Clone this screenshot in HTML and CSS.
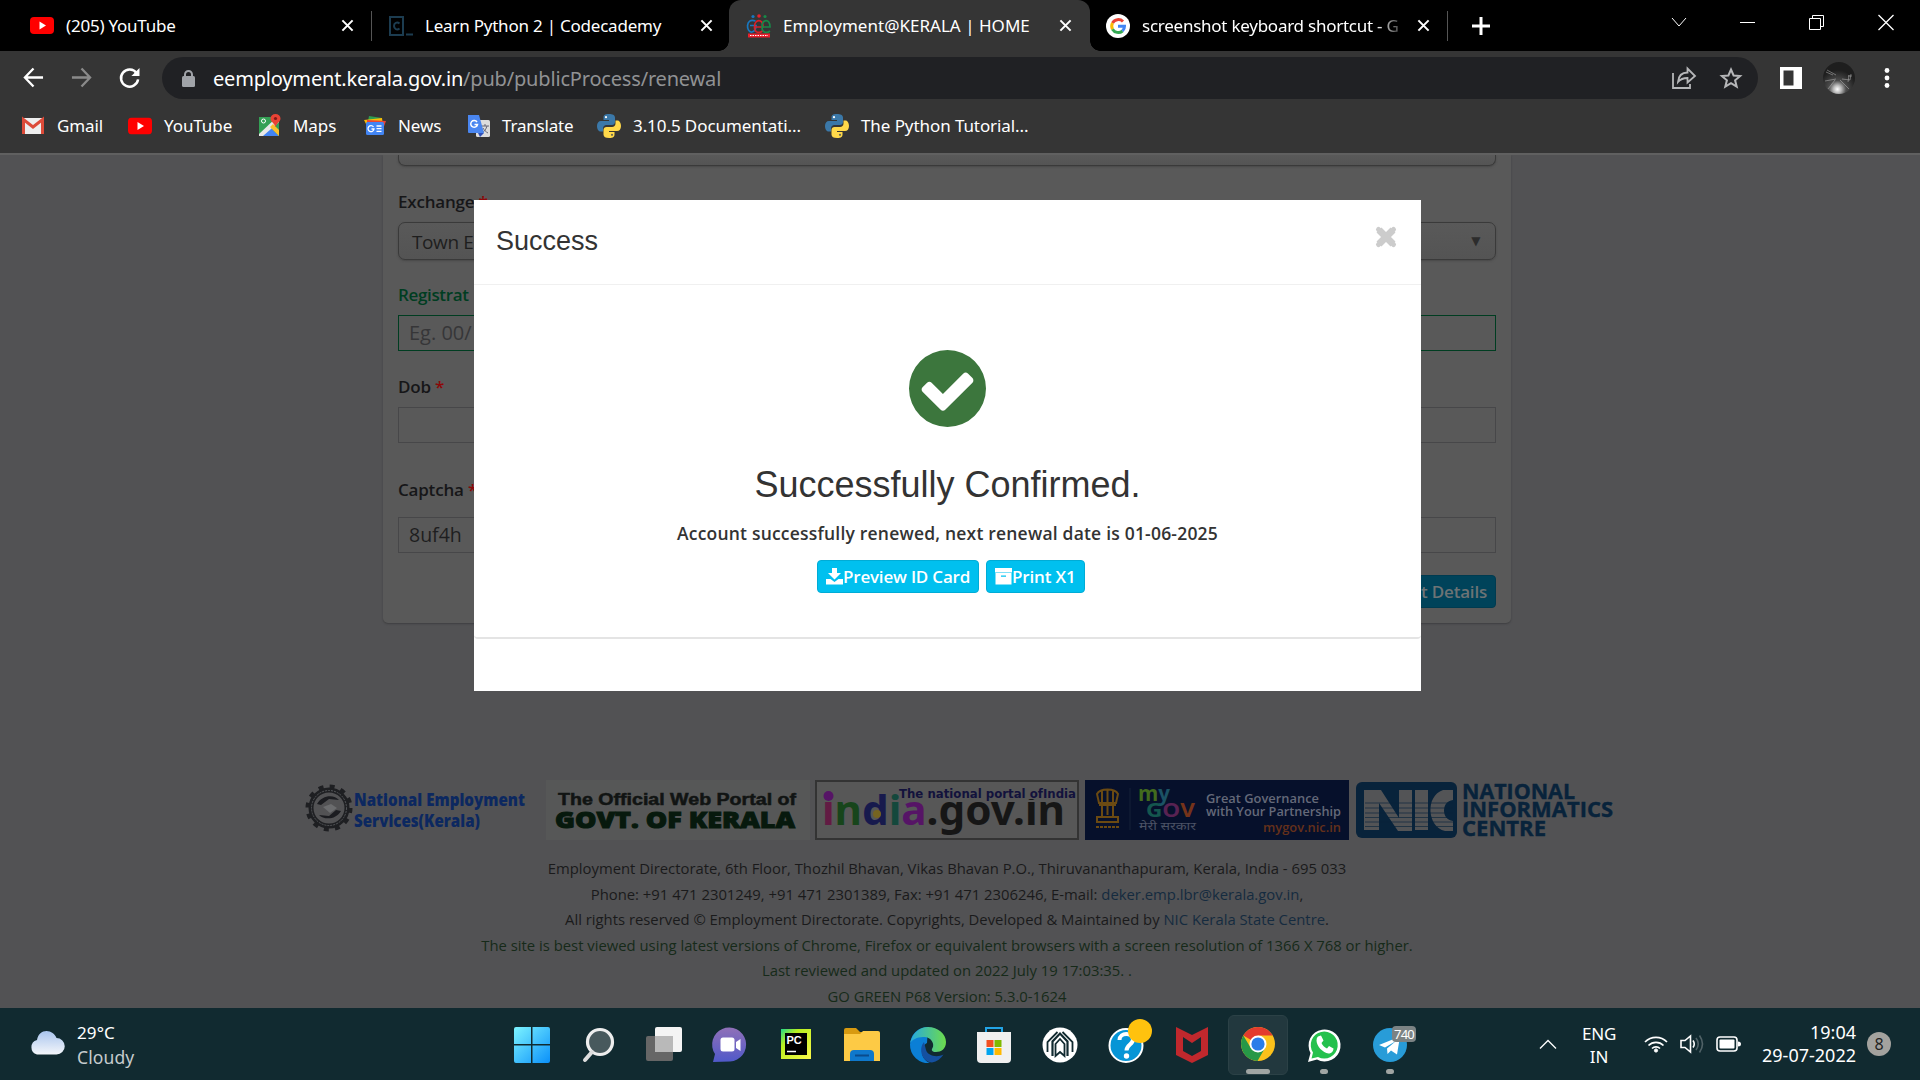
FILE: index.html
```
<!DOCTYPE html>
<html lang="en">
<head>
<meta charset="utf-8">
<title>Employment@KERALA | HOME</title>
<link rel="stylesheet" href="styles.css">
</head>
<body>
<svg class="defs" width="0" height="0">
  <symbol id="yt" viewBox="0 0 24 17"><rect width="24" height="17" rx="4" fill="#f00"/><path d="M9.5 4.5v8l6.5-4z" fill="#fff"/></symbol>
  <symbol id="x" viewBox="0 0 14 14"><path d="M1.5 1.5l11 11M12.500 1.500l-11 11" stroke="#fff" stroke-width="2.200"/></symbol>
  <symbol id="py" viewBox="0 0 24 24"><path d="M11.800 0C7.500 0 6.500 1.500 6.500 3.500V6H12v1H4C1.500 7 0 9 0 12s1.500 5.500 3.500 5.500H6V14.500c0-2 1.500-3.500 3.500-3.500h5.500c1.700 0 3-1.300 3-3V3.500C18 1 15.500 0 11.800 0z" fill="#3b78a8"/><circle cx="9" cy="3.200" r="1.100" fill="#fff"/><path d="M12.200 24c4.300 0 5.300-1.500 5.300-3.500V18H12v-1h8c2.500 0 4-2 4-5s-1.500-5.500-3.500-5.500H18.500v3c0 2-1.500 3.500-3.500 3.500H9.500c-1.700 0-3 1.300-3 3v4.500C6.500 23 8.500 24 12.200 24z" fill="#ffd94a"/><circle cx="15" cy="20.800" r="1.100" fill="#665"/></symbol>
</svg>

<header class="tabs">
  <div class="tab t1"><svg class="fav" height="17"><use href="#yt"/></svg><span>(205) YouTube</span><svg class="x"><use href="#x"/></svg></div>
  <i class="sep"></i>
  <div class="tab t2"><svg class="fav" height="20" viewBox="0 0 24 20"><path d="M1 1h13v18H1z" fill="none" stroke="#1c3c50" stroke-width="2"/><path d="M10.500 7.500C8 5.500 5 7 5 10s3 4.500 5.500 2.500" fill="none" stroke="#1c3c50" stroke-width="2"/><path d="M17 18.500h7" stroke="#1c3c50" stroke-width="2"/></svg><span>Learn Python 2 | Codecademy</span><svg class="x"><use href="#x"/></svg></div>
  <div class="tab t3 active"><svg class="fav" height="24" viewBox="0 0 24 24" fill="none" stroke-width="1.700"><path d="M8.500 7C-2 3-1 19 5 18c4-1 4-5 4-6.500H3" stroke="#1878c0"/><path d="M7.500 13H16c0-9-8.500-8-8.500 0 0 6 5 6.500 8 4" stroke="#d82028"/><path d="M15 13h8c0-9-8-8-8 0 0 6 5 6.500 8 4" stroke="#188848"/><circle cx="6" cy="2.500" r="1.600" fill="#1878c0"/><circle cx="12" cy="2" r="1.800" fill="#e8202c"/><circle cx="18" cy="2.500" r="1.600" fill="#188848"/><path d="M1 21.500h22" stroke="#e8202c" stroke-width="4"/><path d="M3 21.500h18" stroke="#fff" stroke-width="1" stroke-dasharray="1.500 1"/></svg><span>Employment@KERALA | HOME</span><svg class="x"><use href="#x"/></svg></div>
  <div class="tab t4"><svg class="fav" height="24" viewBox="0 0 24 24" fill="none" stroke-width="3"><circle cx="12" cy="12" r="12" fill="#fff"/><path d="M6.500 9A6.700 6.700 0 0 1 17 7.500" stroke="#ea4335"/><path d="M6.500 9a6.700 6.700 0 0 0 0 6.200" stroke="#fbbc05"/><path d="M6.500 15.200A6.700 6.700 0 0 0 16.500 17" stroke="#34a853"/><path d="M12 12.200h6.500c0 2-.8 3.600-2 4.800" stroke="#4285f4"/></svg><span class="fade">screenshot keyboard shortcut - G</span><svg class="x"><use href="#x"/></svg></div>
  <i class="sep"></i>
  <svg class="plus" viewBox="0 0 18 18"><path d="M9 0v18M0 9h18" stroke="#fff" stroke-width="3"/></svg>
  <div class="win">
    <svg viewBox="0 0 16 16"><path d="M1 4l7 8 7-8"/></svg>
    <svg viewBox="0 0 16 16"><path d="M0 8.500h15"/></svg>
    <svg viewBox="0 0 16 16"><path d="M.5 4.500h11v11H.5zM3.500 4V1.500h11v11H12"/></svg>
    <svg viewBox="0 0 16 16"><path d="M.5 1l15 15M15.500 1l-15 15" stroke-width="1.300"/></svg>
  </div>
</header>

<nav class="toolbar">
  <svg class="nav" viewBox="0 0 22 22" fill="none" stroke="#fff" stroke-width="2.400"><path d="M21 11H2.500M11 1.500L2 11l9 9.500"/></svg>
  <svg class="nav" viewBox="0 0 22 22" fill="none" stroke="#8a8a8a" stroke-width="2.400"><path d="M1 11h18.500M11 1.500l9 9.500-9 9.500"/></svg>
  <svg class="nav" viewBox="0 0 22 22" fill="none" stroke="#fff" stroke-width="2.600"><path d="M18.500 6.500A9 9 0 1 0 20 13"/><path d="M21.500 1v8.500H13z" fill="#fff" stroke="none"/></svg>
  <div class="omni">
    <svg class="lock" viewBox="0 0 13 17"><path d="M3 8V4.500a3.500 3.500 0 0 1 7 0V8" fill="none" stroke="#a0a3a8" stroke-width="2"/><rect y="6" width="13" height="11" rx="1.500" fill="#a0a3a8"/></svg>
    <div class="url"><b>eemployment.kerala.gov.in</b>/pub/publicProcess/renewal</div>
    <svg class="share" viewBox="0 0 24 22" fill="none" stroke="#b6b7b9" stroke-width="1.800"><path d="M1 6v15h17v-4"/><path d="M6 15c.5-6 4-9.500 9.500-9.500V1.500L23 9l-7.500 6.500V11C11.500 11 8.500 12 6 15z"/></svg>
    <svg class="star" viewBox="0 0 22 22"><path d="M11 2.500l2.600 6 6.500.5-5 4.300 1.600 6.400-5.700-3.500-5.700 3.500 1.600-6.400-5-4.300 6.500-.5z" fill="none" stroke="#b6b7b9" stroke-width="2"/></svg>
  </div>
  <svg class="panel" viewBox="0 0 22 22"><path d="M0 0h22v22H0z" fill="#fff"/><path d="M3.500 3.500h10v15h-10z" fill="#353535"/></svg>
  <svg class="avatar" viewBox="0 0 32 32"><defs><radialGradient id="av" cx=".45" cy=".85" r=".6"><stop offset="0" stop-color="#fff"/><stop offset=".2" stop-color="#bbb"/><stop offset=".45" stop-color="#4c4c4c"/><stop offset="1" stop-color="#1e1e1e"/></radialGradient></defs><circle cx="16" cy="16" r="16" fill="url(#av)"/><path d="M3 10l7 3M19 17l8 1 1-6M2 19l11-2M4 8l9 5M26 13l-1 7M17 18l9 9M12 18L5 27M25 14h4" stroke="#bbb" fill="none" opacity=".5"/></svg>
  <svg class="dots" viewBox="0 0 6 20" fill="#fff"><circle cx="3" cy="2.500" r="2.400"/><circle cx="3" cy="10" r="2.400"/><circle cx="3" cy="17.500" r="2.400"/></svg>
</nav>

<nav class="marks">
  <span class="m1"><svg viewBox="0 0 24 24"><path d="M1 4h22v16H1z" fill="#eee"/><path d="M2.500 20V5.500L12 13l9.500-7.500V20" fill="none" stroke="#dd4b39" stroke-width="3"/></svg>Gmail</span>
  <span class="m2"><svg viewBox="0 0 24 24"><use href="#yt" y="3.500" height="17"/></svg>YouTube</span>
  <span class="m3"><svg viewBox="0 0 24 24"><path d="M1 3h20v19H1z" fill="#34a055"/><path d="M21 22L12 13 3 22z" fill="#4285f4"/><path d="M1 20L19 3h2v5L5 22H1z" fill="#e8e8e8"/><path d="M12 13l3-3 6 6v6z" fill="#fbc02d"/><path d="M17.500 13c-1-4-5-5-5-8.500a5 4.500 0 0 1 10 0c0 3.500-4 4.500-5 8.500z" fill="#ea4335"/><circle cx="17.500" cy="4.500" r="1.600" fill="#801818"/><circle cx="5.500" cy="7" r="2" fill="none" stroke="#fff"/></svg>Maps</span>
  <span class="m4"><svg viewBox="0 0 24 24"><path d="M6 2l13 2-2 9H4z" fill="#2e9e50"/><path d="M1 6l18-2 1 8H4z" fill="#fbbc05"/><path d="M4 6l19 1-3 8H4z" fill="#ea4335"/><rect x="3" y="8" width="18" height="13" rx="1.500" fill="#4285f4"/><path d="M10.500 13a3 3 0 1 0 .5 2H8.500M13.500 12h5M13.500 14.700h5M13.500 17.300h5" stroke="#fff" stroke-width="1.300" fill="none"/></svg>News</span>
  <span class="m5"><svg viewBox="0 0 24 24"><rect x="9" y="6" width="14" height="17" rx="1.500" fill="#ddd"/><path d="M14 12h8M18 10v2M15 19c3-2 4-4 5-7M16 14c1 2 3 4 5 5" stroke="#667" fill="none"/><path d="M1 1h11l5 18H2q-1 0-1-1z" fill="#4a86f0"/><path d="M17 19l-4 4-2-4z" fill="#3050b8"/><path d="M10 8a3.400 3.400 0 1 0 .5 2.500H7.500" stroke="#fff" stroke-width="1.500" fill="none"/></svg>Translate</span>
  <span class="m6"><svg viewBox="0 0 24 24"><use href="#py"/></svg>3.10.5 Documentati...</span>
  <span class="m7"><svg viewBox="0 0 24 24"><use href="#py"/></svg>The Python Tutorial...</span>
</nav>

<main class="page">
  <section class="card">
    <div class="select top"></div>
    <label class="lb1">Exchange <em>*</em></label>
    <div class="select"><span>Town E</span><i>▼</i></div>
    <label class="lb2 green">Registrat</label>
    <div class="input ok">Eg. 00/</div>
    <label class="lb3">Dob <em>*</em></label>
    <div class="input"></div>
    <label class="lb4">Captcha <em>*</em></label>
    <div class="input typed">8uf4h</div>
    <div class="submit">Submit Details</div>
  </section>

  <section class="logos">
    <svg width="240" height="60" viewBox="0 0 240 60"><circle cx="23" cy="28" r="18" fill="none" stroke="#1e1f22" stroke-width="5"/><circle cx="23" cy="28" r="21.500" fill="none" stroke="#1e1f22" stroke-width="4" stroke-dasharray="5 6.260"/><circle cx="23" cy="28" r="17.500" fill="none" stroke="#55575a" stroke-dasharray="2 1"/><path d="M11 24c5-9 17-10 22-4l-10-1-8 6zM35 31c-5 9-17 9-22 4l10 1 7-6z" fill="#1b1c20"/><path d="M17 27l8-3 6 4-7 5z" fill="#6b6c6e"/><g fill="#0c2860" font-family="Open Sans" font-weight="800" font-size="18"><text x="48" y="26" textLength="171" lengthAdjust="spacingAndGlyphs">National Employment</text><text x="48" y="47" textLength="126" lengthAdjust="spacingAndGlyphs">Services(Kerala)</text></g></svg>
    <svg width="264" height="60" viewBox="0 0 264 60"><path d="M0 0h264v60H0z" fill="#565757"/><text x="12" y="25" fill="#111413" stroke="#111413" stroke-width=".5" font-family="Liberation Sans" font-weight="700" font-size="16" textLength="238" lengthAdjust="spacingAndGlyphs">The Official Web Portal of</text><text x="9" y="48" fill="#07190d" stroke="#07190d" font-family="Open Sans" font-weight="800" font-size="23" textLength="240" lengthAdjust="spacingAndGlyphs">GOVT. OF KERALA</text></svg>
    <svg width="264" height="60" viewBox="0 0 264 60"><path d="M1 1h262v58H1z" fill="#575757" stroke="#333" stroke-width="2"/><text x="7" y="45" font-family="Noto Sans" font-weight="700" font-size="41" textLength="243" lengthAdjust="spacingAndGlyphs"><tspan fill="#621b43">i</tspan><tspan fill="#17451b">n</tspan><tspan fill="#171a4d">d</tspan><tspan fill="#14483c">i</tspan><tspan fill="#561466">a</tspan><tspan fill="#161616">.gov.in</tspan></text><circle cx="13.500" cy="16" r="5" fill="#561466"/><circle cx="62" cy="34" r="4" fill="#756420"/><path d="M84 7h178v12H84z" fill="#575757"/><text x="84" y="18" font-family="DejaVu Sans" font-weight="700" font-size="13" fill="#12123c" textLength="177" lengthAdjust="spacingAndGlyphs">The national portal ofIndia</text></svg>
    <svg width="264" height="60" viewBox="0 0 264 60"><path d="M0 0h264v60H0z" fill="#06102b"/><g fill="none" stroke="#6b4a12" stroke-width="2"><path d="M12 14c3-6 18-6 21 0l-2 9H14zM17 11v11M22.500 9v15M28 11v11M14 25h17M17 25v11M28 25v11M22.500 26v9M12 37h21v5H12z"/><path d="M11 47h24" stroke-dasharray="3 1"/></g><path d="M45 8v42" stroke="#142039"/><g font-family="Open Sans" font-weight="700"><text x="53" y="21" font-size="22" textLength="32" lengthAdjust="spacingAndGlyphs"><tspan fill="#426b1d">m</tspan><tspan fill="#1b5264">y</tspan></text><text x="61" y="37" font-size="20" textLength="49" lengthAdjust="spacingAndGlyphs"><tspan fill="#14564e">G</tspan><tspan fill="#582252">O</tspan><tspan fill="#75331a">V</tspan></text></g><text x="54" y="50" font-family="Noto Sans" font-size="11" fill="#4b5265" textLength="57" lengthAdjust="spacingAndGlyphs">मेरी सरकार</text><g font-family="Open Sans" font-weight="600" fill="#646979"><text x="121" y="23" font-size="12" textLength="113" lengthAdjust="spacingAndGlyphs">Great Governance</text><text x="121" y="36" font-size="12" textLength="135" lengthAdjust="spacingAndGlyphs">with Your Partnership</text><text x="178" y="52" font-size="12" fill="#65301a" textLength="78" lengthAdjust="spacingAndGlyphs">mygov.nic.in</text></g></svg>
    <svg width="262" height="60" viewBox="0 0 262 60"><rect x="1" y="2" width="101" height="56" rx="6" fill="#08233b"/><path d="M9 50V10h17l18 28V10h13v41H43L24 23v27zM60 10h13v40H60zM98 10H88C70 16 72 47 90 51h8V41c-12-1-12-20 0-21z" fill="#535456"/><path d="M10 33h88M10 37.500h88M10 42h88M10 46.500h88M10 23h88M10 28h88" stroke="#08233b" stroke-width="1" opacity=".65"/><g font-family="Open Sans" font-weight="700" font-size="21" fill="#08233b" stroke="#08233b" stroke-width=".4"><text x="107" y="19" textLength="113" lengthAdjust="spacingAndGlyphs">NATIONAL</text><text x="107" y="37" textLength="151" lengthAdjust="spacingAndGlyphs">INFORMATICS</text><text x="107" y="56" textLength="84" lengthAdjust="spacingAndGlyphs">CENTRE</text></g></svg>
  </section>

  <footer class="foot">
    <p class="f1">Employment Directorate, 6th Floor, Thozhil Bhavan, Vikas Bhavan P.O., Thiruvananthapuram, Kerala, India - 695 033</p>
    <p class="f2">Phone: +91 471 2301249, +91 471 2301389, Fax: +91 471 2306246, E-mail: <a>deker.emp.lbr@kerala.gov.in</a>,</p>
    <p class="f3">All rights reserved © Employment Directorate. Copyrights, Developed &amp; Maintained by <a>NIC Kerala State Centre</a>.</p>
    <p class="f4 g">The site is best viewed using latest versions of Chrome, Firefox or equivalent browsers with a screen resolution of 1366 X 768 or higher.</p>
    <p class="f5 g">Last reviewed and updated on 2022 July 19 17:03:35. .</p>
    <p class="f6 g">GO GREEN P68 Version: 5.3.0-1624</p>
  </footer>

  <section class="modal">
    <div class="mhead"><h4>Success</h4><svg class="close" viewBox="0 0 22 22"><path d="M4 4l14 14M18 4L4 18" stroke="#ccc" stroke-width="7"/><path d="M3.500 3.500l15 15M18.500 3.500l-15 15" stroke="#ccc" stroke-width="5" stroke-linecap="round"/></svg></div>
    <div class="mbody">
      <svg class="check" viewBox="128 128 1536 1536"><path fill="#3c763d" d="M1412 734q0-28-18-46l-91-90q-19-19-45-19t-45 19l-408 407-226-226q-19-19-45-19t-45 19l-91 90q-18 18-18 46 0 27 18 45l362 362q19 19 45 19 27 0 46-19l543-543q18-18 18-45zm252 162a768 768 0 1 1-1536 0 768 768 0 1 1 1536 0z"/></svg>
      <h1>Successfully Confirmed.</h1>
      <p>Account successfully renewed, next renewal date is 01-06-2025</p>
      <div class="btns">
        <span class="btn b1"><svg viewBox="0 0 17 17" fill="#fff"><path d="M6 0h5v5h4l-6.500 6.500L2 5h4z"/><path d="M0 11h4.500l4 3 4-3H17v5.500H0z"/></svg><span>Preview ID Card</span></span>
        <span class="btn b2"><svg viewBox="0 0 17 17" fill="#fff"><path d="M0 0h17v4.500H0z"/><path fill-rule="evenodd" d="M.5 4.900h16V16.500H.5zM6 7.500v1.200h5V7.500z"/></svg><span>Print X1</span></span>
      </div>
    </div>
  </section>
</main>

<footer class="task">
  <div class="weather"><svg viewBox="0 0 36 24"><defs><linearGradient id="cl" x2="0" y2="1"><stop stop-color="#a9c5ee"/><stop offset="1" stop-color="#f4f6fa"/></linearGradient></defs><path d="M8 23.500a7.500 7.500 0 0 1 0-14.500C9 3 13 0 17.500 0S26 3 27.500 7a8.200 8.200 0 0 1 0 16.500z" fill="url(#cl)"/></svg><div>29°C<br><small>Cloudy</small></div></div>
  <div class="apps">
    <svg viewBox="0 0 36 36"><defs><linearGradient id="w" x2="1" y2="1"><stop stop-color="#7df4ff"/><stop offset="1" stop-color="#0a90fa"/></linearGradient></defs><path d="M0 2q0-2 2-2h15v17H0zM18.500 0H34q2 0 2 2v15H18.500zM0 18.500h17V36H2q-2 0-2-2zM18.500 18.500H36V34q0 2-2 2H18.500z" fill="url(#w)"/></svg>
    <svg viewBox="0 0 36 36"><circle cx="20" cy="15" r="12.500" fill="#48595d" stroke="#eee" stroke-width="3.200"/><path d="M12 25l-7 8" stroke="#ddd" stroke-width="4" stroke-linecap="round"/></svg>
    <svg viewBox="0 0 36 36"><rect y="9" width="27" height="25" rx="2" fill="#666"/><rect x="9" width="27" height="25" rx="2" fill="#f4f4f4"/><path d="M9 9h18v16H9z" fill="#b9b9b9"/></svg>
    <svg viewBox="0 0 36 36"><defs><linearGradient id="ch" x2="0" y2="1"><stop stop-color="#9070b8"/><stop offset="1" stop-color="#5059c9"/></linearGradient></defs><path d="M1 35l2-8A17 17 0 1 1 18 34.500z" fill="url(#ch)"/><rect x="8.500" y="10.500" width="14" height="14" rx="2.500" fill="#fff"/><path d="M24 15l4.500-3v12L24 21z" fill="#fff"/></svg>
    <svg viewBox="0 0 36 36"><defs><linearGradient id="pc" x2="1" y2="1"><stop stop-color="#21d789"/><stop offset=".3" stop-color="#b8f020"/><stop offset="1" stop-color="#fcf84a"/></linearGradient></defs><path d="M3 2h30v30H3z" fill="url(#pc)"/><path d="M7 6h22v22H7z" fill="#000"/><text x="8.500" y="17" font-family="Liberation Sans" font-weight="700" font-size="11" fill="#fff">PC</text><path d="M9 24.500h9" stroke="#fff" stroke-width="1.500"/></svg>
    <svg viewBox="0 0 36 36"><path d="M0 3q0-2 2-2h10l4 4H34q2 0 2 2v12H0z" fill="#d89a10"/><path d="M0 7h16l3-3h15q2 0 2 2v28H0z" fill="#fdca45"/><path d="M6 34v-7q0-4 4-4h16q4 0 4 4v7z" fill="#0f78cc"/><path d="M11 28.500h14" stroke="#0a4b8c" stroke-width="2"/></svg>
    <svg viewBox="0 0 36 36"><defs><linearGradient id="e1"><stop stop-color="#26a8e0"/><stop offset="1" stop-color="#6ddc4c"/></linearGradient></defs><path d="M18 0a18 18 0 0 0-18 17.500A18 18 0 0 0 20 36C10 32 10 20 17 16z" fill="#0b7fd6"/><path d="M0 16C3 5 10 0 18 0c10 0 18 7 18 15 0 7-5 10-10 10-4 0-5-2-3.500-4C25 17 21 9 13 10 7 10 2 13 0 16z" fill="url(#e1)"/><path d="M14 15C8 22 12 35 22 35.500c5-1 9-4 11.500-8C27 31 18 29 16 23q-1-4-2-8z" fill="#1450a0"/></svg>
    <svg viewBox="0 0 36 36"><path d="M10 7V1h16v6" fill="none" stroke="#22a4e6" stroke-width="2"/><path d="M1 5h34v27q0 4-4 4H5q-4 0-4-4z" fill="#f0f0f0"/><path d="M10.500 13h7v7h-7z" fill="#f25022"/><path d="M18.500 13h7v7h-7z" fill="#7fba00"/><path d="M10.500 21h7v7h-7z" fill="#00a4ef"/><path d="M18.500 21h7v7h-7z" fill="#ffb900"/></svg>
    <svg viewBox="0 0 36 36"><circle cx="18" cy="18" r="17.500" fill="#fff"/><g fill="none" stroke="#112a30" stroke-width="1.800"><path d="M5.500 25V15L15.500 5M30.500 25V15L20.500 5"/><path d="M10.500 29V14.500L18 6.500l7.500 8V29" stroke-width="2.200"/><path d="M13.500 29V17l4.500-5 4.500 5v12l-4.500-4z"/></g></svg>
    <svg viewBox="0 0 36 36"><circle cx="18" cy="18.500" r="16.500" fill="#0695d6" stroke="#fff" stroke-width="2"/><path d="M11.500 13c0-8 13.500-8 13.500-.5 0 5-6.500 5-6.500 11" fill="none" stroke="#fff" stroke-width="4"/><circle cx="18.500" cy="29" r="2.700" fill="#fff"/><circle cx="32" cy="4" r="12" fill="#ffc20e"/></svg>
    <svg viewBox="0 0 36 36"><path d="M2 0l16 8 16-8v28l-16 8-16-8zM9 10v14l9 5 9-5V10l-9 6z" fill="#c0282d" fill-rule="evenodd"/></svg>
    <div class="on"><svg viewBox="0 0 36 36"><circle cx="18" cy="18" r="17" fill="#fbc11b"/><path d="M18 18L3.300 9.500A17 17 0 0 1 32.700 9.500H18z" fill="#e33b2e"/><path d="M3.300 9.500A17 17 0 0 0 17.500 35L25 22l-14.500-.5z" fill="#279847"/><circle cx="18" cy="18" r="8.500" fill="#fff"/><circle cx="18" cy="18" r="6.600" fill="#2a7de9"/></svg></div>
    <svg viewBox="0 0 36 36"><path d="M2 35l2.500-9A16 16 0 1 1 11 32.500z" fill="#fff"/><path d="M5.500 31.500l1.500-6A13.500 13.500 0 1 1 12 30z" fill="#25c14d"/><path d="M12 9.500l3-1 2.500 5-2 2.500c1 2.500 3 4.500 5.500 5.500l2-2.500 4.500 2.500c0 3-2.500 5-5 5C17 26 10.500 19 10.500 13.500q0-3 1.500-4z" fill="#fff"/></svg>
    <div class="tg"><svg viewBox="0 0 36 36"><circle cx="18" cy="18" r="17" fill="#289cd8"/><path d="M7 18l21-8.500-3 18-6-4-3.500 3.500-.5-5.500L24 14l-11 6.500z" fill="#fff"/></svg><b>740</b></div>
  </div>
  <div class="tray">
    <svg class="up" viewBox="0 0 18 10"><path d="M1 9.500L9 1.500l8 8" fill="none" stroke="#fff" stroke-width="1.300"/></svg>
    <div class="lang">ENG<br>IN</div>
    <svg class="wifi" viewBox="0 0 24 18" fill="none" stroke="#fff" stroke-width="1.700"><path d="M1 7a15.500 15.500 0 0 1 22 0M4.500 10.500a10.500 10.500 0 0 1 15 0M8 13.500a5.800 5.800 0 0 1 8 0"/><circle cx="12" cy="15.500" r="1.600" fill="#fff" stroke-width="1"/></svg>
    <svg class="vol" viewBox="0 0 25 20" fill="none" stroke="#fff" stroke-width="1.600"><path d="M1 6.500h4L10.500 2v16L5 13.500H1zM13 6.500q2.500 3.500 0 7"/><path d="M16 4q4.500 6 0 12M19.500 1.500q6 8.500 0 17" stroke="#506267"/></svg>
    <svg class="bat" viewBox="0 0 25 16"><rect x="1" y="1" width="20" height="14" rx="3" fill="none" stroke="#fff" stroke-width="1.600"/><rect x="3.500" y="3.500" width="15" height="9" rx="1" fill="#fff"/><path d="M22 5.500q3 0 3 2.500t-3 2.500z" fill="#fff"/></svg>
    <div class="clock">19:04<br>29-07-2022</div>
    <div class="note">8</div>
  </div>
</footer>
</body>
</html>
```
FILE: styles.css
```
* { box-sizing: border-box; }
body { margin: 0; width: 1920px; height: 1080px; overflow: hidden; background: #525254; font-family: "Noto Sans", sans-serif; color: #fff; }
svg { flex: none; display: block; overflow: visible; }
.defs { position: absolute; }
p, h1, h4 { margin: 0; font-weight: 400; }

/* tab strip */
.tabs { height: 51px; background: #000; display: flex; align-items: center; font-size: 17px; white-space: nowrap; }
.tab { display: flex; align-items: center; height: 51px; }
.tab span { margin-left: 12px; flex: 1; letter-spacing: -.22px; }
.fav { width: 24px; }
.x { width: 13px; height: 13px; }
.t1 { width: 371px; padding: 0 17px 0 30px; }
.sep { width: 1px; height: 30px; background: #555; }
.t2 { width: 357px; padding: 0 16px 0 17px; }
.t3 { width: 361px; padding: 0 18px 0 18px; background: #353535; border-radius: 12px 12px 0 0; position: relative; }
.t3 span { letter-spacing: .02px; }
.t3::before, .t3::after { content: ""; position: absolute; bottom: 0; width: 10px; height: 10px; }
.t3::before { left: -10px; background: radial-gradient(circle at 0 0, #000 9.500px, #353535 10px); }
.t3::after { right: -10px; background: radial-gradient(circle at 100% 0, #000 9.500px, #353535 10px); }
.t4 { width: 357px; padding: 0 17px 0 16px; }
.t4 .fade { flex: none; width: 266px; letter-spacing: -.25px; margin-right: 9px; -webkit-mask-image: linear-gradient(90deg, #000 88%, transparent); mask-image: linear-gradient(90deg, #000 88%, transparent); }
.plus { width: 18px; height: 18px; margin-left: 24px; }
.win { display: flex; gap: 53px; margin: -8px 26px 0 auto; }
.win svg { width: 16px; height: 16px; fill: none; stroke: #fff; }

/* address bar */
.toolbar { height: 49px; background: #353535; display: flex; align-items: center; padding-left: 23px; }
.nav { width: 21px; height: 21px; margin-right: 27px; margin-top: 4px; }
.omni { width: 1596px; height: 42px; margin: 5px 0 0 -5px; border-radius: 21px; background: #202124; display: flex; align-items: center; padding: 0 16px 0 20px; }
.lock { width: 13px; height: 17px; }
.url { flex: 1; margin-left: 18px; font-size: 20px; letter-spacing: -.18px; color: #919294; }
.url b { font-weight: 400; color: #fff; }
.share { width: 24px; height: 22px; margin-right: 24px; }
.star { width: 22px; height: 22px; }
.panel { width: 22px; height: 22px; margin: 4px 0 0 22px; }
.avatar { width: 32px; height: 32px; margin: 5px 0 0 21px; }
.dots { width: 6px; height: 20px; margin: 4px 0 0 29px; }

/* bookmarks */
.marks { height: 55px; background: #353535; border-bottom: 2px solid #606060; display: flex; align-items: center; padding: 0 0 2px 21px; font-size: 17px; letter-spacing: -.08px; white-space: nowrap; }
.marks span { display: flex; align-items: center; flex: none; }
.marks svg { width: 24px; height: 24px; margin-right: 12px; }
.m1 { width: 107px; } .m2 { width: 130px; } .m3 { width: 105px; } .m4 { width: 104px; } .m5 { width: 130px; letter-spacing: -.2px; } .m6 { width: 228px; }
.marks .m3 svg, .marks .m4 svg, .marks .m5 svg { margin-right: 11px; }

/* page */
.page { height: 853px; position: relative; overflow: hidden; background: #525254; font-family: "Open Sans", sans-serif; }
.card { width: 1128px; height: 468px; margin-left: 383px; padding: 0 15px; background: #595959; border-radius: 0 0 5px 5px; box-shadow: 0 1px 2px #3e3e40; display: flex; flex-direction: column; color: #161618; }
.card label { font-size: 17px; font-weight: 600; line-height: 24px; letter-spacing: -.2px; }
.card em { color: #8c0808; font-style: normal; }
.select { height: 38px; flex: none; border: 1px solid #3a3a3a; border-radius: 7px; background: linear-gradient(#595959, #545454); box-shadow: 0 1px 2px #484848; display: flex; align-items: center; justify-content: space-between; padding: 0 15px 0 13px; font-size: 19px; letter-spacing: -.4px; color: #1e1e1e; }
.select span { padding-top: 2px; }
.select.top { height: 11px; border-top: 0; border-radius: 0 0 7px 7px; }
.select i { font: 12px "DejaVu Sans", sans-serif; color: #2c2c2c; }
.lb1 { margin: 24px 0 8px; }
.lb2 { margin: 23px 0 8px; }
.lb3 { margin: 24px 0 8px; }
.lb4 { margin: 35px 0 15px; }
.card .green { color: #003d21; letter-spacing: -.35px; }
.input { height: 36px; flex: none; border: 1px solid #474749; padding-left: 10px; line-height: 34px; font-size: 19px; }
.ok { border-color: #003d21; color: #363638; font-size: 20px; }
.typed { color: #1e1e20; font-size: 19.5px; }
.submit { align-self: flex-end; height: 33px; margin-top: 22px; padding: 0 8px; border-radius: 4px; background: #00435a; border: 1px solid #003b50; line-height: 31px; font-size: 17px; font-weight: 600; letter-spacing: -.2px; color: #6d7375; }
.logos { display: flex; margin: 157px 0 0 306px; }
.logos svg + svg { margin-right: 6px; }
.logos svg:nth-child(2) { margin-right: 5px; }
.foot { margin-top: 16px; text-align: center; width: 1894px; font-size: 14.830px; line-height: 25.600px; color: #1a1a1b; white-space: nowrap; }
.foot a { color: #152b3f; }
.foot .g { color: #162a19; }

/* dialog */
.modal { position: absolute; left: 474px; top: 45px; width: 947px; height: 491px; background: #fff; color: #333; }
.mhead { height: 85px; padding: 0 24px 0 22px; border-bottom: 1px solid #f0f0f0; display: flex; justify-content: space-between; }
.mhead h4 { font: 27px/83px "Liberation Sans", sans-serif; }
.close { width: 22px; height: 22px; margin-top: 26px; }
.mbody { height: 354px; border-bottom: 2px solid #e4e4e4; border-radius: 0 0 4px 4px; display: flex; flex-direction: column; align-items: center; padding-top: 65px; }
.check { width: 77px; height: 77px; }
.mbody h1 { font: 36px/40px "Liberation Sans", sans-serif; margin-top: 38px; }
.mbody p { font-size: 17.500px; font-weight: 600; line-height: 24px; letter-spacing: .2px; margin-top: 16px; white-space: nowrap; }
.btns { display: flex; gap: 7px; margin: 15px 0 0 7px; }
.btn { height: 33px; display: flex; align-items: center; padding: 0 8px; border-radius: 4px; background: #00c0ef; border: 1px solid #00acd6; color: #fff; font-size: 17px; font-weight: 600; white-space: nowrap; }
.btn svg { width: 17px; height: 17px; }
.b1 { width: 162px; letter-spacing: -.2px; }
.b2 { width: 99px; letter-spacing: -.15px; }

/* taskbar */
.task { height: 72px; background: #112a30; display: flex; align-items: center; font-size: 17px; line-height: 23px; }
.weather { width: 498px; padding-left: 29px; display: flex; align-items: center; gap: 12px; line-height: 24px; letter-spacing: .1px; padding-top: 2px; }
.weather svg { width: 36px; height: 24px; margin-top: -5px; }
.weather small { font-size: 17.500px; color: #c5cccd; }
.apps { display: flex; align-items: center; width: 924px; padding-left: 16px; gap: 30px; }
.apps > svg, .apps div svg { width: 36px; height: 36px; margin-top: 2px; }
.apps div { width: 36px; position: relative; }
.apps .on { width: 60px; height: 60px; margin: 2px -12px 0; padding: 8px 11px; border-radius: 6px; background: #22383e; border: 1px solid #2b4146; }
.on::after, .tg::after { content: ""; position: absolute; height: 5px; border-radius: 3px; background: #a0a5a3; }
.on::after { left: 17px; bottom: 0; width: 24px; }
.tg::after { left: 14px; top: 44px; width: 8px; box-shadow: -66px 0 #a0a5a3; }
.tg b { position: absolute; left: 20px; top: 1px; width: 24px; height: 16px; border-radius: 4px; background: #7c8384; font: 13px/16px "Noto Sans", sans-serif; letter-spacing: -.7px; text-align: center; }
.tray { flex: 1; display: flex; align-items: center; padding-left: 117px; }
.up { width: 18px; height: 10px; }
.lang { width: 36px; margin: 1px 0 0 24px; text-align: center; letter-spacing: -.2px; }
.wifi { width: 24px; height: 18px; margin-left: 27px; }
.vol { width: 25px; height: 20px; margin-left: 12px; }
.bat { width: 25px; height: 16px; margin-left: 11px; }
.clock { width: 115px; font-size: 18px; text-align: right; letter-spacing: 0; white-space: nowrap; }
.note { width: 24px; height: 24px; margin-left: 11px; border-radius: 50%; background: #a3a29e; color: #222; text-align: center; font-size: 16px; line-height: 24px; }
```
